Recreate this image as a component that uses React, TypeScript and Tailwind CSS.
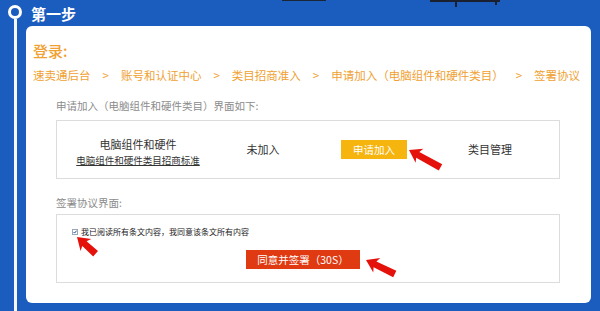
import React from "react";

const FONT = '"Noto Sans CJK SC", "Noto Sans", "Liberation Sans", sans-serif';

function Arrow({ tx, ty, angle, len }: { tx: number; ty: number; angle: number; len: number }) {
  const pts = `0,0 12,-8 10,-3.2 ${len},-3.6 ${len},3.6 10,3.2 12,8`;
  return <polygon points={pts} fill="#e5120c" transform={`translate(${tx} ${ty}) rotate(${angle})`} />;
}

export default function App() {
  return (
    <div
      className="relative w-[600px] h-[311px] bg-[#1b5cbf] flex overflow-hidden"
      style={{ fontFamily: FONT }}
    >
      {/* decorative dark shapes at top */}
      <div className="absolute left-[282px] top-0 w-[44px] h-[1px] bg-[#1a2535]" />
      <div className="absolute left-[430px] top-0 w-[70px] h-[2px] bg-[#1a2030]" />
      <div className="absolute left-[455px] top-0 w-[2px] h-[7px] bg-[#1a2030]" />
      <div className="absolute left-[495px] top-0 w-[2px] h-[5px] bg-[#1a2030]" />

      {/* timeline */}
      <div className="w-[26px] shrink-0 flex flex-col pl-[8px]">
        <div className="mt-[5px] w-[14px] h-[14px] rounded-full border-[3px] border-white bg-[#1b5cbf]" />
        <div className="ml-[6px] w-[3px] flex-1 bg-[#f4f8fc]" />
      </div>

      <div className="flex-1 flex flex-col pr-[9px] pb-[8px]">
        <div className="h-[26px] flex items-center pl-[5px] text-white font-bold text-[15px] leading-none">
          第一步
        </div>
        <div className="flex-1 bg-white rounded-[6px] pl-[7px] pt-[15px]">
          <div className="text-[15px] leading-[20px] font-medium text-[#f0a132]">登录:</div>
          <div className="mt-[5px] flex items-center text-[11.5px] leading-[18px] text-[#f0a132] whitespace-nowrap">
            <span>速卖通后台</span>
            <span className="mx-[12px]">&gt;</span>
            <span>账号和认证中心</span>
            <span className="mx-[12px]">&gt;</span>
            <span>类目招商准入</span>
            <span className="mx-[12px]">&gt;</span>
            <span>申请加入（电脑组件和硬件类目）</span>
            <span className="mx-[12px]">&gt;</span>
            <span>签署协议</span>
          </div>

          <div className="ml-[23px] w-[504px]">
            <div className="mt-[14px] text-[10.5px] leading-[16px] text-[#8c8c8c]">
              申请加入（电脑组件和硬件类目）界面如下:
            </div>
            <div className="mt-[6px] h-[59px] border border-[#dcdcdc] flex items-center text-[#333]">
              <div className="w-[162px] flex flex-col items-center pt-[3px]">
                <div className="text-[11px] leading-[16px]">电脑组件和硬件</div>
                <div className="text-[9.5px] leading-[14px] underline mt-[1px]">电脑组件和硬件类目招商标准</div>
              </div>
              <div className="w-[88px] text-center text-[11px]">未加入</div>
              <div className="w-[134px] flex justify-center">
                <div className="w-[66px] h-[19px] bg-[#f5b40e] text-white text-[10.5px] flex items-center justify-center">
                  申请加入
                </div>
              </div>
              <div className="w-[98px] text-center text-[11px]">类目管理</div>
            </div>

            <div className="mt-[16px] text-[10.5px] leading-[16px] text-[#8c8c8c]">签署协议界面:</div>
            <div className="mt-[3px] h-[69px] border border-[#dcdcdc] text-[#333]">
              <div className="mt-[12px] ml-[15px] flex items-center">
                <div className="w-[6px] h-[6px] border border-[#9aa7b8] bg-white flex items-center justify-center">
                  <svg width="6" height="6" viewBox="0 0 6 6">
                    <path d="M0.8 3 L2.4 4.6 L5.4 1" stroke="#1d3f8a" strokeWidth="1.4" fill="none" />
                  </svg>
                </div>
                <span className="ml-[3px] text-[8px] leading-[10px] text-[#222]">我已阅读所有条文内容，我同意该条文所有内容</span>
              </div>
              <div className="mt-[13px] ml-[189px] w-[114px] h-[19px] bg-[#e03a12] text-white text-[10.5px] flex items-center justify-center">
                同意并签署（30S）
              </div>
            </div>
          </div>
        </div>
      </div>

      <svg className="absolute inset-0 pointer-events-none" width="600" height="311">
        <Arrow tx={409} ty={150} angle={29} len={36} />
        <Arrow tx={77} ty={237} angle={42} len={25} />
        <Arrow tx={366} ty={260} angle={26} len={32} />
      </svg>
    </div>
  );
}
